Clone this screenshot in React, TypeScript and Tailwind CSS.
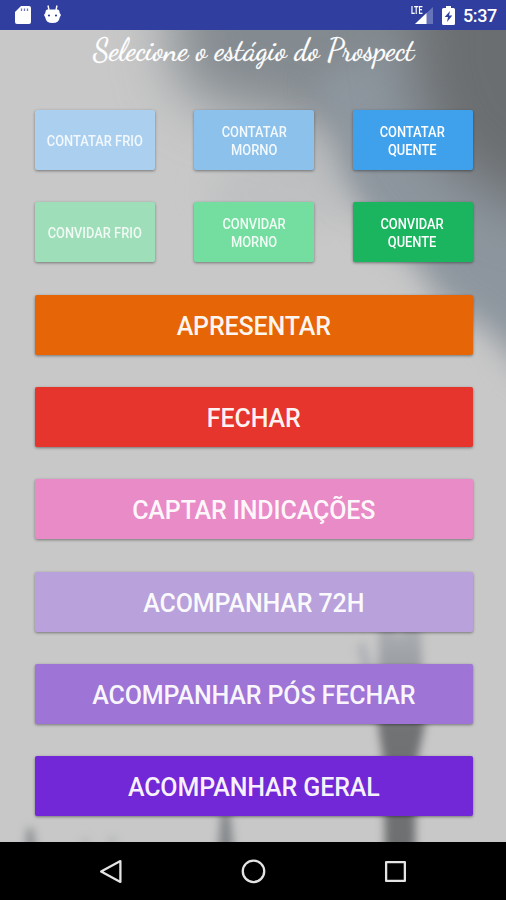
type Action = { lines: string[]; color: string };

const small: Action[] = [
  { lines: ["CONTATAR FRIO"], color: "bg-[#abd0ef] text-white/85" },
  { lines: ["CONTATAR", "MORNO"], color: "bg-[#8bc1eb] text-white/90" },
  { lines: ["CONTATAR", "QUENTE"], color: "bg-[#3fa1ec] text-white" },
  { lines: ["CONVIDAR FRIO"], color: "bg-[#9edeb9] text-white/85" },
  { lines: ["CONVIDAR", "MORNO"], color: "bg-[#74dea0] text-white/90" },
  { lines: ["CONVIDAR", "QUENTE"], color: "bg-[#1bb55f] text-white" },
];

const large = [
  { label: "APRESENTAR", color: "bg-[#e66607]" },
  { label: "FECHAR", color: "bg-[#e5352c]" },
  { label: "CAPTAR INDICAÇÕES", color: "bg-[#e98bc7]" },
  { label: "ACOMPANHAR 72H", color: "bg-[#b9a2dc]" },
  { label: "ACOMPANHAR PÓS FECHAR", color: "bg-[#9e75d6]" },
  { label: "ACOMPANHAR GERAL", color: "bg-[#7328d7]" },
];

function Backdrop() {
  return (
    <svg className="absolute inset-0 h-full w-full" viewBox="0 30 506 812" preserveAspectRatio="none" aria-hidden="true">
      <defs>
        <filter id="wide" filterUnits="userSpaceOnUse" x="-100" y="-150" width="800" height="800" colorInterpolationFilters="sRGB"><feGaussianBlur stdDeviation="28" /></filter>
        <filter id="mid" filterUnits="userSpaceOnUse" x="-100" y="-150" width="800" height="800" colorInterpolationFilters="sRGB"><feGaussianBlur stdDeviation="15" /></filter>
        <filter id="soft" x="-50%" y="-50%" width="200%" height="200%" colorInterpolationFilters="sRGB"><feGaussianBlur stdDeviation="4" /></filter>
        <linearGradient id="arm" x1="0" y1="0" x2="0" y2="1">
          <stop offset="0" stopColor="#b0b3b7" />
          <stop offset="0.22" stopColor="#999ca0" />
          <stop offset="0.45" stopColor="#717274" />
          <stop offset="1" stopColor="#6e6f70" />
        </linearGradient>
      </defs>
      <rect y="30" width="506" height="812" fill="#c8c8c8" />
      <path d="M165-140H680V180H380L345 145 290 120 210 105 175 80Z" fill="#848b90" filter="url(#wide)" />
      <path d="M315 80 400 40H680V400L530 375 488 330 440 300 415 262 375 225 340 180Z" fill="#8d969e" filter="url(#mid)" />
      <path d="M430-140H680V210L520 210 440 155 410 70Z" fill="#6b6e70" filter="url(#wide)" />
      <path d="M310 122Q336 125 340 165L350 205 330 225H230L200 190Z" fill="#b7babc" opacity=".55" filter="url(#mid)" />
      <g filter="url(#soft)">
        <path d="M379 615H393L399 640 405 615H421L422 665 425 725 416 765 415 870H385L384 765 378 725Z" fill="url(#arm)" />
        <path d="M357 646 364 641 378 676H362Z" fill="#b0b3b7" />
        <path d="M221 812H230L235 860H217Z" fill="#85888b" />
        <path d="M27 828H33L38 860H24Z" fill="#8e9195" />
        <path d="M83 838H89V860H81ZM109 837H116V860H107Z" fill="#b2b4b6" />
      </g>
    </svg>
  );
}

function StatusBar() {
  return (
    <header className="flex h-[30px] shrink-0 items-center justify-between bg-[#303f9f] pl-[15px] pr-[9px]">
      <div className="flex items-center gap-[13px]">
        <svg width="16" height="20" viewBox="0 0 16 20">
          <path d="M6 1H14Q16 1 16 3V17Q16 19 14 19H2Q0 19 0 17V7Z" fill="white" />
          <path d="M6.5 3.5V6M9.5 3.5V6M12.5 3.5V6" stroke="#303f9f" strokeWidth="1.3" opacity=".7" />
        </svg>
        <svg width="17" height="20" viewBox="0 0 17 20">
          <path d="M4 0.5 5 5M13 .5 12 5" stroke="white" strokeWidth="1.4" />
          <path d="M3 4.5H14Q15.7 5 15.7 8L17 10 15.7 12.5Q15 18 8.5 18T1.3 12.5L0 10 1.3 8Q1.3 5 3 4.5Z" fill="white" />
          <circle cx="5" cy="10.5" r="1.1" fill="#303f9f" /><circle cx="12" cy="10.5" r="1.1" fill="#303f9f" />
        </svg>
      </div>
      <div className="flex items-center font-[Roboto,sans-serif] text-white">
        <div className="relative h-[20px] w-[23px]">
          <svg className="h-full w-full" viewBox="0 0 23 20">
            <path d="M22 2V19H4Z" fill="#6874ba" />
            <path d="M15.5 8V19H4Z" fill="white" />
          </svg>
          <span className="absolute left-0 top-px origin-left scale-x-[.72] text-[10px] font-bold leading-[10px]">LTE</span>
        </div>
        <svg className="ml-[8px]" width="13" height="19" viewBox="0 0 13 19">
          <path d="M4 0H9V2H11.5Q13 2 13 3.5V17.5Q13 19 11.5 19H1.5Q0 19 0 17.5V3.5Q0 2 1.5 2H4Z" fill="white" />
          <path d="M8 5 2.7 11H6L5 16 10.3 9.5H7Z" fill="#303f9f" />
        </svg>
        <span className="ml-[8px] mt-[2px] w-[34px] whitespace-nowrap text-[18px] font-medium leading-[22px] tracking-[-.4px]">5:37</span>
      </div>
    </header>
  );
}

const buttonBase = "flex h-[60px] items-center justify-center rounded-[2px] shadow-[0_1px_3px_rgba(0,0,0,.42)]";

export default function App() {
  return (
    <div className="flex h-[900px] w-[506px] flex-col overflow-hidden bg-[#c8c8c8] font-[Roboto,sans-serif]">
      <StatusBar />
      <main className="relative h-[812px] shrink-0 overflow-hidden">
        <Backdrop />
        <div className="relative flex flex-col pl-[35px] pr-[33.5px]">
          <h1 className="flex h-[40px] items-center justify-center">
            <span className="whitespace-nowrap font-['Dancing_Script',cursive] text-[30px] leading-[38px] text-white [-webkit-text-stroke:.3px_white]">Selecione o estágio do Prospect</span>
          </h1>
          <div className="mt-[40.3px] grid grid-cols-[120px_120px_120px] justify-between gap-y-[32.1px]">
            {small.map(({ lines, color }) => (
              <button key={lines.join(" ")} className={`${buttonBase} ${color}`}>
                <span className="scale-x-[.83] whitespace-nowrap pt-px text-[15.5px] font-medium leading-[18px]">
                  {lines.map((line) => <span className="block" key={line}>{line}</span>)}
                </span>
              </button>
            ))}
          </div>
          <div className="mt-[32.3px] flex flex-col gap-[32.3px]">
            {large.map(({ label, color }) => (
              <button key={label} className={`${buttonBase} ${color} whitespace-nowrap pt-[4px] text-[25px] font-medium leading-[30px] tracking-[-.12px] text-white/95`}>{label}</button>
            ))}
          </div>
        </div>
      </main>
      <nav className="grid h-[58px] shrink-0 grid-cols-[142.5px_142.5px_142.5px] items-center justify-center bg-black">
        {["M21.5 2V22L3 12Z", "M12 1.5A10.3 10.3 0 1 1 12 22.1A10.3 10.3 0 1 1 12 1.5Z", "M3 3H21V21H3Z"].map((d) => (
          <button key={d} className="flex justify-center">
            <svg width="25" height="25" viewBox="0 0 24 24" fill="none" stroke="#e4e4e4" strokeWidth="2.2" strokeLinejoin="round"><path d={d} /></svg>
          </button>
        ))}
      </nav>
    </div>
  );
}
